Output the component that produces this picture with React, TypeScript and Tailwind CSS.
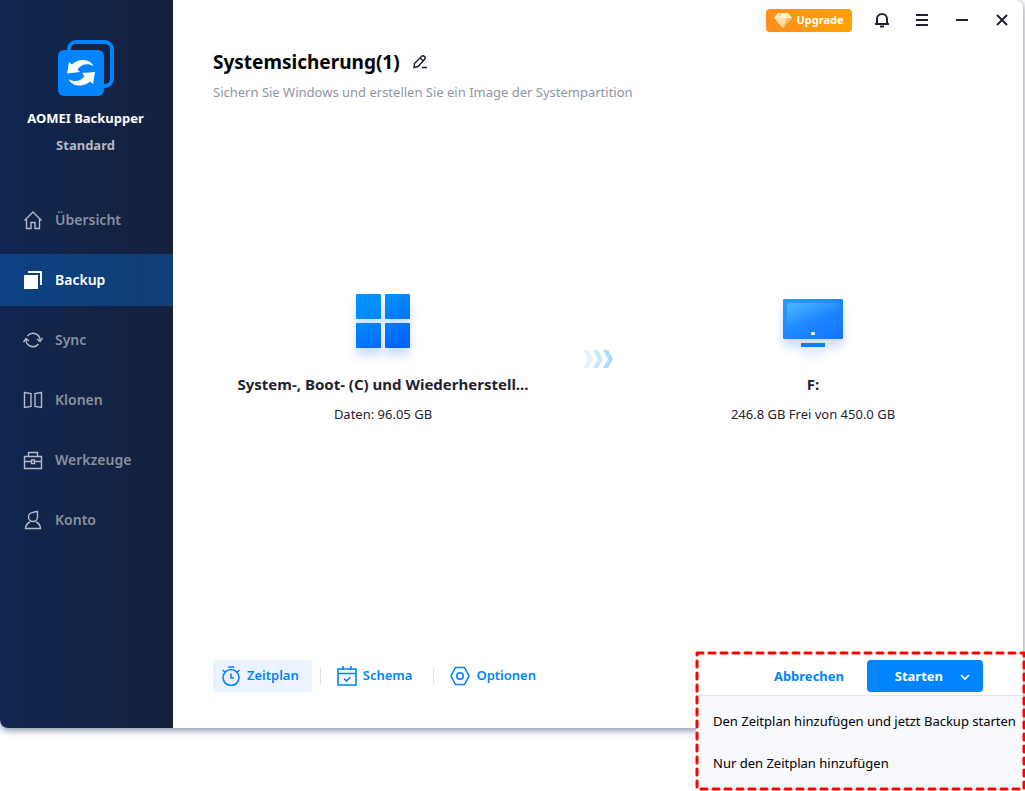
import { useState } from 'react';
import type { ReactNode } from 'react';
import clsx from 'clsx';

interface NavEntry {
  id: string;
  label: string;
  icon: ReactNode;
}

const navEntries: NavEntry[] = [
  {
    id: 'home',
    label: 'Übersicht',
    icon: <path d="M1.500 10.500 10 2l8.500 8.500M3.500 9v9.500h4.500v-6h4v6h4.500V9" />,
  },
  {
    id: 'backup',
    label: 'Backup',
    icon: (
      <>
        <path d="M1 5h14v14H1z" fill="currentColor" stroke="none" />
        <path d="M5 2h13v13" strokeWidth="2" />
      </>
    ),
  },
  {
    id: 'sync',
    label: 'Sync',
    icon: (
      <>
        <path d="M4.500 6A7 7 0 0 1 17 10.500M15.500 14A7 7 0 0 1 3 9.500" />
        <path d="M14 9l3 2.500L19.500 8M.500 12 3 8.500 6 11" />
      </>
    ),
  },
  {
    id: 'clone',
    label: 'Klonen',
    icon: <path d="M1.500 2.500 8 3.500v13l-6.500 1zM18.500 2.500l-6.500 1v13l6.500 1z" />,
  },
  {
    id: 'tools',
    label: 'Werkzeuge',
    icon: <path d="M1.500 6.500h17v12h-17zM5.500 6.500v-4h9v4M1.500 11.500h7M11.500 11.500h7M8.500 10h3v3.500h-3z" />,
  },
  {
    id: 'account',
    label: 'Konto',
    icon: <path d="M14.500 1.500v5.500A4.500 4.500 0 1 1 10 2.500Q12 1.500 14.500 1.500zM7 12Q3 13.500 2.500 18.500h15Q17 13.500 13 12" />,
  },
];

function Logo() {
  return (
    <svg width="56" height="56" viewBox="0 0 56 56" aria-hidden="true">
      <rect x="11" y="2" width="43" height="44" rx="7" fill="none" stroke="#0084ff" strokeWidth="4" />
      <rect x="0" y="10" width="46" height="46" rx="6" fill="#0084ff" />
      <path d="M9 33.500 11 22l3 2.500C20 18 32 18.500 35.500 26 30 23 23 24 19.500 29.500l2.500 2.500z" fill="#fff" />
      <path d="M37 32 35 44l-3-2.500C26 47.500 14 47 10.500 39 16 42.500 23 41.500 26.500 36l-2.500-3z" fill="#fff" />
    </svg>
  );
}

function WindowsIcon() {
  return (
    <svg width="54" height="54" viewBox="0 0 54 54" className="drop-shadow-[0_8px_5px_#2563eb38]" aria-hidden="true">
      <defs>
        <linearGradient id="tiles" gradientUnits="userSpaceOnUse" x1="10" y1="0" x2="44" y2="54">
          <stop offset="0.200" stopColor="#0090ff" />
          <stop offset="1" stopColor="#0062ff" />
        </linearGradient>
      </defs>
      <g fill="url(#tiles)">
        <rect width="25" height="25" rx="1" />
        <rect x="29" width="25" height="25" rx="1" />
        <rect y="29" width="25" height="25" rx="1" />
        <rect x="29" y="29" width="25" height="25" rx="1" />
      </g>
    </svg>
  );
}

function MonitorIcon() {
  return (
    <svg width="60" height="54" viewBox="0 0 60 54" className="overflow-visible drop-shadow-[0_8px_5px_#2563eb38]" aria-hidden="true">
      <defs>
        <linearGradient id="screen" x1="0" y1="0" x2="1" y2="1">
          <stop offset="0" stopColor="#2b9dff" />
          <stop offset="1" stopColor="#1273ff" />
        </linearGradient>
        <linearGradient id="glare" x1="0" y1="0" x2="0.600" y2="1">
          <stop offset="0" stopColor="#4fb2ff" />
          <stop offset="0.600" stopColor="#4fb2ff" stopOpacity="0" />
        </linearGradient>
      </defs>
      <rect y="5" width="60" height="40" rx="1" fill="url(#screen)" />
      <rect x="4" y="9" width="52" height="32" fill="url(#glare)" />
      <rect x="28" y="38" width="4" height="3" rx="1" fill="#fff" />
      <rect x="18" y="49" width="24" height="4" fill="#0580ff" />
    </svg>
  );
}

function TitleBar() {
  const button = 'flex h-8 w-10 items-center justify-center text-[#1f2230]';
  return (
    <div className="flex h-10 items-center justify-end pr-px">
      <button type="button" className="mr-[10px] flex h-[23px] w-[86px] items-center justify-center gap-1 rounded bg-linear-to-r from-[#ff8f1c] to-[#ffa200] text-[11px] font-bold text-white">
        <svg width="18" height="15" viewBox="0 0 18 15" aria-hidden="true">
          <path d="M4 0h10l4 5-9 10L0 5z" fill="#ffdf9e" />
          <path d="M4 0 0 5h5zM9 0l4 5h5l-4-5z" fill="#ffeecb" />
          <path d="M5 5h8L9 0z" fill="#fff5df" />
          <path d="M13 5h5L9 15z" fill="#f6bd62" />
        </svg>
        Upgrade
      </button>
      <button type="button" className={button} aria-label="Benachrichtigungen">
        <svg width="16" height="16" viewBox="0 0 16 16" fill="none" stroke="currentColor" strokeWidth="2" aria-hidden="true">
          <path d="M3 12V7a5 5 0 0 1 10 0v5M1 12h14M6 14.500h4" />
        </svg>
      </button>
      <button type="button" className={button} aria-label="Menü">
        <svg width="12" height="12" viewBox="0 0 12 12" stroke="currentColor" strokeWidth="2" aria-hidden="true">
          <path d="M0 1h12M0 6h12M0 11h12" />
        </svg>
      </button>
      <button type="button" className={button} aria-label="Minimieren">
        <svg width="12" height="12" viewBox="0 0 12 12" stroke="currentColor" strokeWidth="2" aria-hidden="true">
          <path d="M0 6h12" />
        </svg>
      </button>
      <button type="button" className={button} aria-label="Schließen">
        <svg width="12" height="12" viewBox="0 0 12 12" stroke="currentColor" strokeWidth="2" aria-hidden="true">
          <path d="M1 1l10 10M11 1 1 11" />
        </svg>
      </button>
    </div>
  );
}

interface ToolButtonProps {
  label: string;
  active?: boolean;
  children: ReactNode;
}

function ToolButton({ label, active, children }: ToolButtonProps) {
  return (
    <button
      type="button"
      className={clsx(
        'flex h-8 items-center gap-[6px] rounded-sm pr-[13px] pl-2 font-semibold text-[#0084ff]',
        active && 'bg-[#ebf3ff]'
      )}
    >
      <svg width="20" height="20" viewBox="0 0 20 20" fill="none" stroke="currentColor" strokeWidth="1.600" aria-hidden="true">
        {children}
      </svg>
      {label}
    </button>
  );
}

export default function App() {
  const [page, setPage] = useState('backup');
  const [menuOpen, setMenuOpen] = useState(true);

  return (
    <div className="flex min-h-screen bg-white pr-[2px] pb-[63px] font-['Noto_Sans','Open_Sans',sans-serif] text-[13px] text-[#1f2230]">
      <div className="flex flex-1 rounded-lg bg-white shadow-[0_2px_6px_1px_#4a5a7a99]">
        <aside className="w-[173px] shrink-0 rounded-bl-lg bg-linear-to-r from-[#10264f] to-[#15213d] pt-10">
          <div className="flex flex-col items-center pr-[2px]">
            <Logo />
            <p className="mt-3 leading-5 font-bold text-white">AOMEI Backupper</p>
            <p className="mt-[7px] leading-5 font-bold text-[#b4b8c3]">Standard</p>
          </div>
          <nav className="mt-[39px] flex flex-col gap-2">
            {navEntries.map((entry) => (
              <button
                key={entry.id}
                type="button"
                onClick={() => setPage(entry.id)}
                className={clsx(
                  'flex h-[52px] items-center gap-3 pl-[23px] text-sm font-semibold',
                  page === entry.id ? 'bg-linear-to-r from-[#0e4184] to-[#103e74] text-white' : 'text-[#8a919e]'
                )}
              >
                <svg
                  width="20"
                  height="20"
                  viewBox="0 0 20 20"
                  fill="none"
                  stroke="currentColor"
                  strokeWidth="1.400"
                  className={page === entry.id ? 'text-white' : 'text-[#b4bac8]'}
                  aria-hidden="true"
                >
                  {entry.icon}
                </svg>
                {entry.label}
              </button>
            ))}
          </nav>
        </aside>

        <main className="flex min-w-0 flex-1 flex-col">
          <TitleBar />

          <header className="px-10 pt-2">
            <div className="flex items-center gap-3">
              <h1 className="text-[19px] leading-7 font-bold text-black">Systemsicherung(1)</h1>
              <button type="button" aria-label="Namen bearbeiten">
                <svg width="16" height="16" viewBox="0 0 16 16" fill="none" stroke="#1f2230" strokeWidth="1.500" aria-hidden="true">
                  <path d="M2 13.500 2.500 9.500 9.500 2.500Q11 1 12.500 2.500T12.500 5.500L6 12.500zM8 4l3.500 3M10 13.500h5" />
                </svg>
              </button>
            </div>
            <p className="mt-[6px] leading-5 text-[#8f95a3]">Sichern Sie Windows und erstellen Sie ein Image der Systempartition</p>
          </header>

          <section className="grid flex-1 grid-cols-[1fr_90px_1fr] items-center px-10 pb-9">
            <div className="flex min-w-0 flex-col items-center">
              <WindowsIcon />
              <h2 className="mt-[26px] max-w-full truncate text-[15px] leading-5 font-bold">System-, Boot- (C) und Wiederherstell...</h2>
              <p className="mt-[10px] leading-5">Daten: 96.05 GB</p>
            </div>
            <svg width="30" height="18" viewBox="0 0 30 18" className="justify-self-center" aria-hidden="true">
              <path d="M0 0h5l5 9-5 9H0l5-9z" fill="#e6f0ff" />
              <path d="M10 0h5l5 9-5 9h-5l5-9z" fill="#c7e8ff" />
              <path d="M20 0h5l5 9-5 9h-5l5-9z" fill="#addbff" />
            </svg>
            <div className="flex min-w-0 flex-col items-center">
              <MonitorIcon />
              <h2 className="mt-[26px] text-[15px] leading-5 font-bold">F:</h2>
              <p className="mt-[10px] leading-5">246.8 GB Frei von 450.0 GB</p>
            </div>
          </section>

          <footer className="flex items-start justify-between pb-[33px] pl-10">
            <div className="flex items-center gap-2 pt-2">
              <ToolButton label="Zeitplan" active>
                <circle cx="10" cy="11.500" r="8" />
                <path d="M7 1h6M10 7.500V12h3M1.500 4l2.500 2M18.500 4 16 6" />
              </ToolButton>
              <span className="h-4 w-px bg-[#dcdfe5]" />
              <ToolButton label="Schema">
                <path d="M1 3h18v16H1zM1 7.500h18M6 0v4M14 0v4M7 12.500l2.500 2.500 4-4" />
              </ToolButton>
              <span className="h-4 w-px bg-[#dcdfe5]" />
              <ToolButton label="Optionen">
                <path d="M5.500 1.500h9L19 10l-4.500 8.500h-9L1 10z" />
                <circle cx="10" cy="10" r="3.200" />
              </ToolButton>
            </div>

            <div className="relative flex h-[43px] w-[327px] items-start justify-end pt-2 pr-10">
              <button type="button" className="mr-[23px] h-8 pt-px font-bold text-[#0084ff]">Abbrechen</button>
              <button
                type="button"
                onClick={() => setMenuOpen(!menuOpen)}
                className="flex h-8 w-[116px] items-center justify-end gap-4 rounded bg-[#0084ff] pt-px pr-3 font-bold text-white"
                aria-haspopup="menu"
                aria-expanded={menuOpen}
              >
                Starten
                <svg width="12" height="8" viewBox="0 0 12 8" fill="none" stroke="currentColor" strokeWidth="1.600" aria-hidden="true">
                  <path d="M2 2l4 4 4-4" />
                </svg>
              </button>

              {menuOpen && (
                <div role="menu" className="absolute top-full left-0 flex w-full flex-col border-t border-[#dfe3ea] bg-[#f7f9fc] py-[5px] text-black">
                  <button type="button" role="menuitem" className="h-[42px] pl-[17px] text-left whitespace-nowrap">
                    Den Zeitplan hinzufügen und jetzt Backup starten
                  </button>
                  <button type="button" role="menuitem" className="h-[42px] pl-[17px] text-left whitespace-nowrap">
                    Nur den Zeitplan hinzufügen
                  </button>
                </div>
              )}
              {/* red marker around the start actions */}
              <svg className="pointer-events-none absolute top-0 left-0 h-[138px] w-full overflow-visible" aria-hidden="true">
                <rect x="1" y="1" width="100%" height="136" fill="none" stroke="#ff0000" strokeWidth="3" strokeDasharray="6 6" strokeLinecap="round" strokeLinejoin="round" />
              </svg>
            </div>
          </footer>
        </main>
      </div>
    </div>
  );
}
